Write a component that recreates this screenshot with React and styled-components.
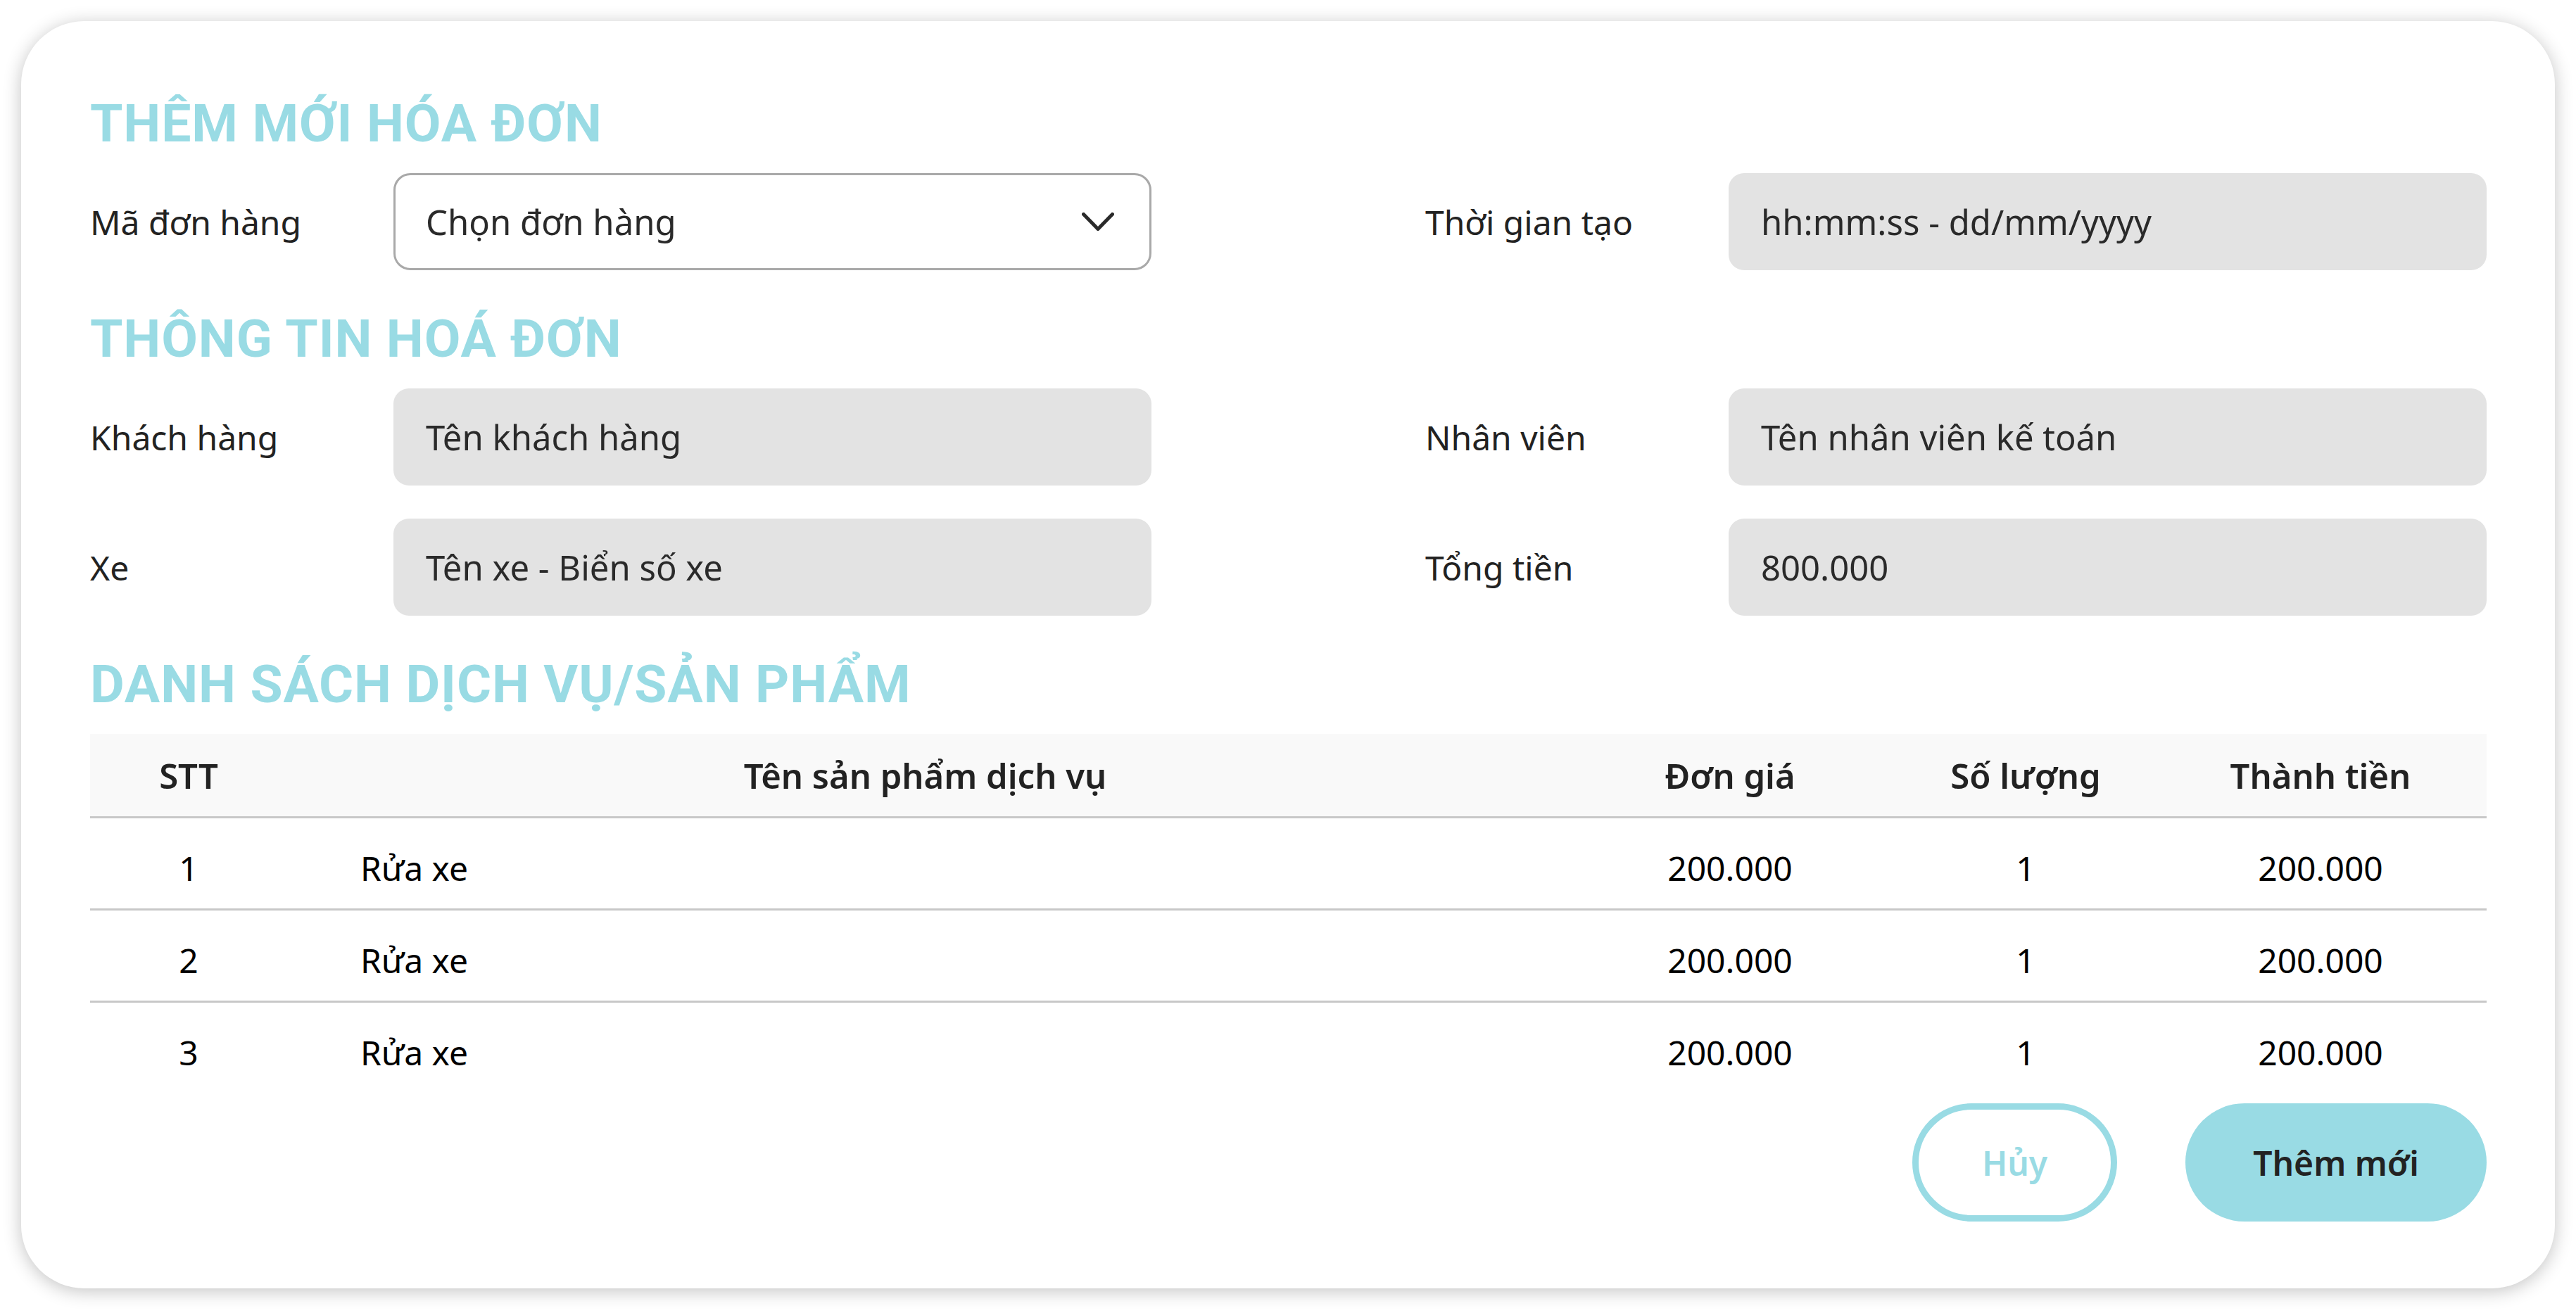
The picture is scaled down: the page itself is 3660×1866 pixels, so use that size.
import React from 'react';
import styled, { createGlobalStyle } from 'styled-components';

const cyan = '#99dbe4';
const grayField = '#e3e3e3';
const line = '#c8c8c8';
const bodyFont = "'Noto Sans', 'Open Sans', sans-serif";

const GlobalStyle = createGlobalStyle`
  body {
    margin: 0;
    background: #ffffff;
    font-family: ${bodyFont};
  }
  * { box-sizing: border-box; }
`;

const Page = styled.div`
  padding: 30px;
`;

const Card = styled.div`
  width: 3600px;
  background: #ffffff;
  border-radius: 90px;
  box-shadow: 0 4px 26px rgba(0, 0, 0, 0.24);
  padding: 108px 97px 95px 98px;
`;

const SectionTitle = styled.h2`
  margin: ${props => (props.first ? '0' : props.top || '60px')} 0 33px;
  font-family: Roboto, 'Liberation Sans', sans-serif;
  font-weight: 700;
  font-size: 75px;
  line-height: 75px;
  letter-spacing: 0.9px;
  color: ${cyan};
`;

const FormGrid = styled.div`
  display: grid;
  grid-template-columns: 1fr 1fr;
  column-gap: 389px;
  row-gap: 47px;
`;

const Field = styled.div`
  display: grid;
  grid-template-columns: 431px 1fr;
  align-items: center;
`;

const Label = styled.label`
  font-size: 48px;
  color: #222222;
`;

const ReadOnlyBox = styled.div`
  height: 138px;
  border-radius: 22px;
  background: ${grayField};
  display: flex;
  align-items: center;
  padding-left: 46px;
  font-size: 49px;
  color: #2a2a2a;
`;

const SelectBox = styled.div`
  height: 138px;
  border-radius: 24px;
  border: 3px solid #a9a9a9;
  background: #ffffff;
  display: flex;
  align-items: center;
  justify-content: space-between;
  padding: 0 50px 0 43px;
  font-size: 49px;
  color: #2a2a2a;
`;

const Table = styled.div`
  display: flex;
  flex-direction: column;
`;

const columns = '280px 1fr 474px 366px 472px';

const HeadRow = styled.div`
  display: grid;
  grid-template-columns: ${columns};
  align-items: center;
  height: 120px;
  background: #f9f9f9;
  border-bottom: 3px solid ${line};
`;

const HeadCell = styled.div`
  text-align: center;
  font-size: 49px;
  font-weight: 600;
  color: #222222;
`;

const BodyRow = styled.div`
  display: grid;
  grid-template-columns: ${columns};
  align-items: center;
  height: ${props => (props.last ? '128px' : '131px')};
  padding-top: 12px;
  border-bottom: ${props => (props.last ? 'none' : `3px solid ${line}`)};
`;

const Cell = styled.div`
  text-align: ${props => (props.left ? 'left' : 'center')};
  padding-left: ${props => (props.left ? '104px' : '0')};
  font-size: 48px;
  color: #000000;
`;

const Actions = styled.div`
  display: flex;
  justify-content: flex-end;
  gap: 97px;
  margin-top: 15px;
`;

const Button = styled.button`
  height: 168px;
  width: ${props => (props.primary ? '428px' : '291px')};
  border-radius: 84px;
  border: ${props => (props.primary ? 'none' : `9px solid ${cyan}`)};
  background: ${props => (props.primary ? cyan : '#ffffff')};
  color: ${props => (props.primary ? '#222222' : cyan)};
  font-family: ${bodyFont};
  font-weight: 600;
  font-size: 48px;
  cursor: pointer;
`;

const Chevron = () => (
  <svg width="46" height="26" viewBox="0 0 46 26" fill="none">
    <polyline
      points="2.5,2.5 23,23.5 43.5,2.5"
      stroke="#2a2a2a"
      strokeWidth="5"
      strokeLinecap="round"
      strokeLinejoin="round"
    />
  </svg>
);

const rows = [
  { id: 1, name: 'Rửa xe', price: '200.000', qty: 1, total: '200.000' },
  { id: 2, name: 'Rửa xe', price: '200.000', qty: 1, total: '200.000' },
  { id: 3, name: 'Rửa xe', price: '200.000', qty: 1, total: '200.000' },
];

const App = () => (
  <Page>
    <GlobalStyle />
    <Card>
      <SectionTitle first>THÊM MỚI HÓA ĐƠN</SectionTitle>
      <FormGrid>
        <Field>
          <Label>Mã đơn hàng</Label>
          <SelectBox>
            <span>Chọn đơn hàng</span>
            <Chevron />
          </SelectBox>
        </Field>
        <Field>
          <Label>Thời gian tạo</Label>
          <ReadOnlyBox>hh:mm:ss - dd/mm/yyyy</ReadOnlyBox>
        </Field>
      </FormGrid>

      <SectionTitle>THÔNG TIN HOÁ ĐƠN</SectionTitle>
      <FormGrid>
        <Field>
          <Label>Khách hàng</Label>
          <ReadOnlyBox>Tên khách hàng</ReadOnlyBox>
        </Field>
        <Field>
          <Label>Nhân viên</Label>
          <ReadOnlyBox>Tên nhân viên kế toán</ReadOnlyBox>
        </Field>
        <Field>
          <Label>Xe</Label>
          <ReadOnlyBox>Tên xe - Biển số xe</ReadOnlyBox>
        </Field>
        <Field>
          <Label>Tổng tiền</Label>
          <ReadOnlyBox>800.000</ReadOnlyBox>
        </Field>
      </FormGrid>

      <SectionTitle>DANH SÁCH DỊCH VỤ/SẢN PHẨM</SectionTitle>
      <Table>
        <HeadRow>
          <HeadCell>STT</HeadCell>
          <HeadCell>Tên sản phẩm dịch vụ</HeadCell>
          <HeadCell>Đơn giá</HeadCell>
          <HeadCell>Số lượng</HeadCell>
          <HeadCell>Thành tiền</HeadCell>
        </HeadRow>
        {rows.map((r, i) => (
          <BodyRow key={r.id} last={i === rows.length - 1}>
            <Cell>{r.id}</Cell>
            <Cell left>{r.name}</Cell>
            <Cell>{r.price}</Cell>
            <Cell>{r.qty}</Cell>
            <Cell>{r.total}</Cell>
          </BodyRow>
        ))}
      </Table>

      <Actions>
        <Button>Hủy</Button>
        <Button primary>Thêm mới</Button>
      </Actions>
    </Card>
  </Page>
);

export default App;
